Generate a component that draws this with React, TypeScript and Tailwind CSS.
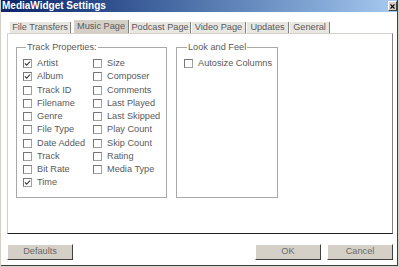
import type { ReactNode } from "react";

const font = { fontFamily: '"Liberation Sans", Arial, sans-serif' };

const tabs = [
  { label: "File Transfers", w: "w-[62px]" },
  { label: "Music Page", w: "w-[56px]", active: true },
  { label: "Podcast Page", w: "w-[62px]" },
  { label: "Video Page", w: "w-[55px]" },
  { label: "Updates", w: "w-[43px]" },
  { label: "General", w: "w-[41px]" },
];

const left = [
  ["Artist", true],
  ["Album", true],
  ["Track ID", false],
  ["Filename", false],
  ["Genre", false],
  ["File Type", false],
  ["Date Added", false],
  ["Track", false],
  ["Bit Rate", false],
  ["Time", true],
] as const;

const right = [
  "Size",
  "Composer",
  "Comments",
  "Last Played",
  "Last Skipped",
  "Play Count",
  "Skip Count",
  "Rating",
  "Media Type",
];

function Check({ label, checked = false }: { label: string; checked?: boolean }) {
  return (
    <div className="flex items-center h-[13.25px] gap-[5px]">
      <span className="w-[9px] h-[9px] shrink-0 bg-white border border-t-[#777] border-l-[#777] border-r-[#a0a0a0] border-b-[#a0a0a0] flex items-center justify-center">
        {checked && (
          <svg width="7" height="7" viewBox="0 0 7 7">
            <path d="M0.9 3.4 L2.7 5.2 L6.1 1.5" fill="none" stroke="#333" strokeWidth="1.1" />
          </svg>
        )}
      </span>
      <span className="text-[9.2px] text-[#5a5a5a] whitespace-nowrap leading-none">{label}</span>
    </div>
  );
}

function Group({ title, className, children }: { title: string; className: string; children: ReactNode }) {
  return (
    <fieldset className={`border border-[#a8a8a8] ${className}`}>
      <legend className="ml-[3px] px-[1px] text-[9.2px] leading-[11px] text-[#5a5a5a]">{title}</legend>
      {children}
    </fieldset>
  );
}

function Button({ children, className = "" }: { children: ReactNode; className?: string }) {
  return (
    <button
      type="button"
      className={`h-[16px] w-[66px] bg-[#d4d0c8] border border-t-white border-l-white border-r-[#404040] border-b-[#404040] text-[9.2px] text-[#6a6a6a] leading-none ${className}`}
    >
      {children}
    </button>
  );
}

export default function App() {
  return (
    <div className="w-[400px] h-[267px] border-l border-r-2 border-b border-[#d4d0c8] bg-[#d4d0c8]" style={font}>
      <div className="h-full flex flex-col bg-white border-r border-b border-[#404040]">
        {/* title bar */}
        <div className="h-[12px] shrink-0 flex items-center justify-between pl-[1px] bg-gradient-to-r from-[#0a246a] to-[#a6caf0]">
          <span className="text-[10px] font-bold text-white leading-none">MediaWidget Settings</span>
          <span className="w-[9px] h-[10px] bg-[#d4d0c8] border border-t-white border-l-white border-r-[#404040] border-b-[#404040] flex items-center justify-center">
            <svg width="5" height="5" viewBox="0 0 5 5">
              <path d="M0.5 0.5 L4.5 4.5 M4.5 0.5 L0.5 4.5" stroke="#000" strokeWidth="1.1" />
            </svg>
          </span>
        </div>

        <div className="flex-1 flex flex-col pl-[6px] pr-[4px]">
          {/* tabs */}
          <div className="mt-[8px] h-[13px] flex items-end pl-[2px]">
            {tabs.map((t) =>
              t.active ? (
                <div
                  key={t.label}
                  className={`${t.w} h-[13px] ml-[2px] bg-[#d4d0c8] border-l border-l-white border-r border-r-[#808080] flex items-center justify-center text-[9.2px] text-[#5a5a5a]`}
                >
                  {t.label}
                </div>
              ) : (
                <div
                  key={t.label}
                  className={`${t.w} h-[11px] bg-[#e8e6e1] border-l border-l-white border-r border-r-[#808080] flex items-center justify-center text-[9.2px] text-[#5a5a5a]`}
                >
                  {t.label}
                </div>
              )
            )}
          </div>

          {/* panel */}
          <div className="h-[201px] border-t border-l border-t-[#d4d0c8] border-l-[#d4d0c8] border-r border-r-[#808080] border-b border-b-[#202020] flex items-start gap-[9px] pl-[8px] pt-[8px]">
            <Group title="Track Properties:" className="w-[151px] h-[156px] pl-[6px] pt-[4px]">
              <div className="flex">
                <div className="w-[70px] flex flex-col">
                  {left.map(([l, c]) => (
                    <Check key={l} label={l} checked={c} />
                  ))}
                </div>
                <div className="flex flex-col">
                  {right.map((l) => (
                    <Check key={l} label={l} />
                  ))}
                </div>
              </div>
            </Group>
            <Group title="Look and Feel" className="w-[102px] h-[156px] pl-[7px] pt-[4px]">
              <Check label="Autosize Columns" />
            </Group>
          </div>

          {/* buttons */}
          <div className="mt-[10px] flex items-center">
            <Button>Defaults</Button>
            <div className="flex-1" />
            <Button className="mr-[6px]">OK</Button>
            <Button>Cancel</Button>
          </div>
        </div>
      </div>
    </div>
  );
}
